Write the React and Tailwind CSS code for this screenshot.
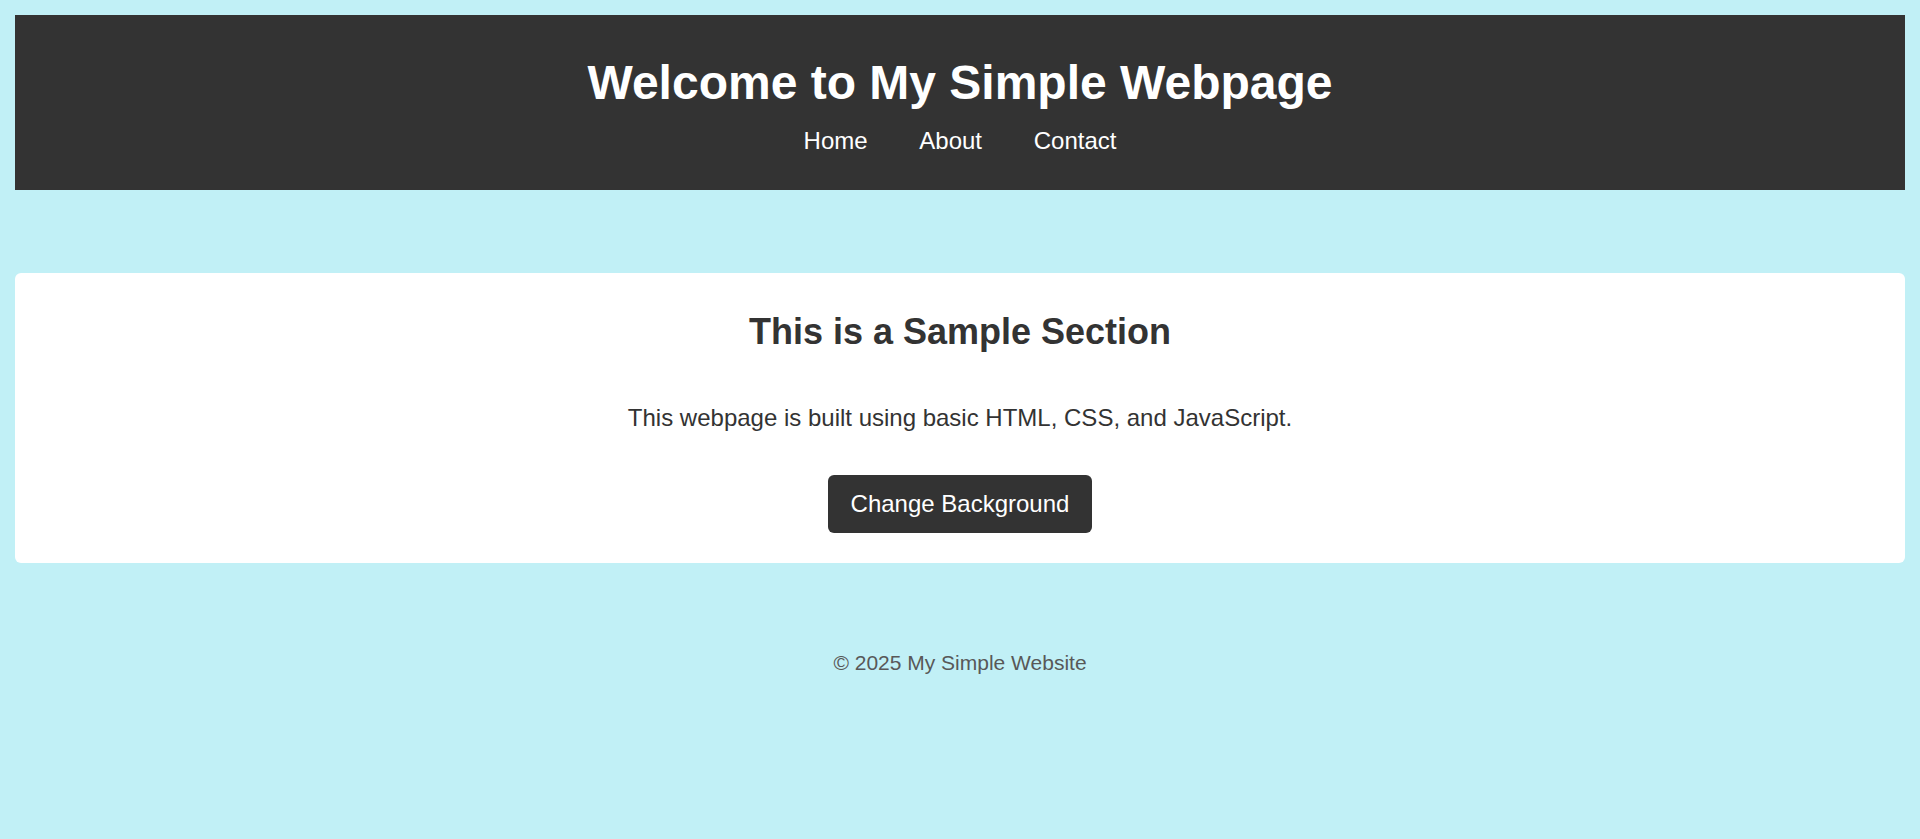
export default function App() {
  return (
    <div className="min-h-screen bg-[#c1f0f6] p-[15px] font-['Liberation_Sans',Arial,sans-serif]">
      <header className="bg-[#333333] text-white text-center pt-[40px] pb-[35px]">
        <h1 className="text-[48px] font-bold leading-[normal]">Welcome to My Simple Webpage</h1>
        <nav className="mt-[17px] flex justify-center gap-[51.7px] text-[24px] leading-[normal]">
          <a href="#" className="text-white">Home</a>
          <a href="#" className="text-white">About</a>
          <a href="#" className="text-white">Contact</a>
        </nav>
      </header>
      <section className="mt-[83px] bg-white rounded-[6px] text-center pt-[38px] pb-[30px] text-[#333333] flex flex-col items-center">
        <h2 className="text-[36px] font-bold leading-[normal]">This is a Sample Section</h2>
        <p className="mt-[51px] text-[24px] leading-[normal]">This webpage is built using basic HTML, CSS, and JavaScript.</p>
        <button className="mt-[43px] bg-[#333333] text-white text-[24px] leading-[normal] py-[15px] px-[23px] rounded-[6px] cursor-pointer">
          Change Background
        </button>
      </section>
      <footer className="mt-[88px] text-center text-[21px] leading-[normal] text-[#585858]">
        © 2025 My Simple Website
      </footer>
    </div>
  );
}
